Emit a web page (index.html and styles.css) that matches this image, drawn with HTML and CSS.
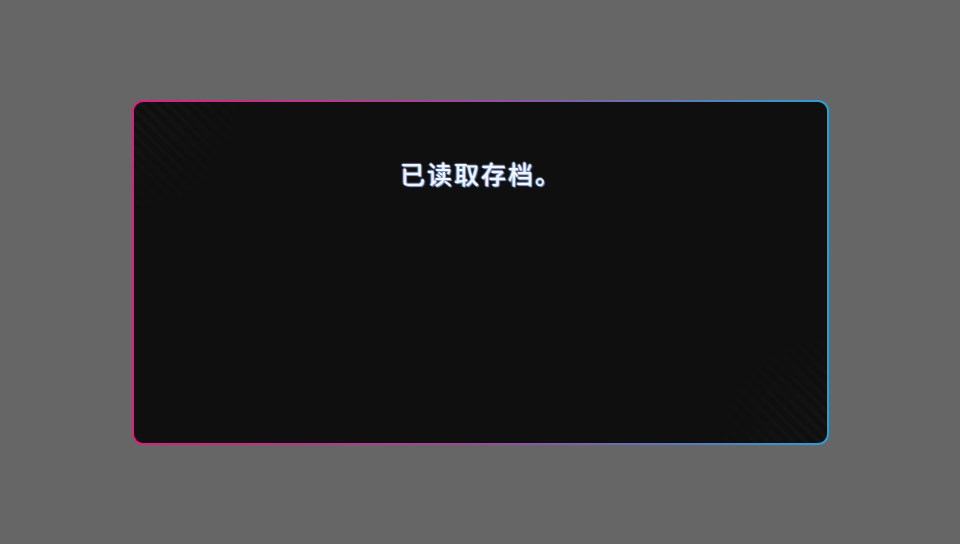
FILE: index.html
```html
<!DOCTYPE html>
<html lang="zh-CN">
<head>
<meta charset="utf-8">
<title>存档</title>
<link rel="stylesheet" href="styles.css">
</head>
<body>
<div class="stage">
  <div class="card">
    <p class="message">已读取存档。</p>
  </div>
</div>
</body>
</html>
```
FILE: styles.css
```css
html, body {
  margin: 0;
  padding: 0;
  height: 100%;
  background: #666666;
}
.stage {
  height: 100%;
  display: flex;
  align-items: center;
  justify-content: center;
}
.card {
  position: relative;
  box-sizing: border-box;
  width: 697px;
  height: 345px;
  border: 2px solid transparent;
  border-radius: 11px;
  background:
    linear-gradient(#0f0f0f, #0f0f0f) padding-box,
    linear-gradient(90deg, #de1f7c 0%, #9a4a9c 50%, #2a9fd4 100%) border-box;
  padding-top: 53px;
  overflow: hidden;
}
.card::before,
.card::after {
  content: "";
  position: absolute;
  width: 150px;
  height: 150px;
  background: repeating-linear-gradient(45deg, rgba(255,255,255,0.025) 0 4px, transparent 4px 9px);
  pointer-events: none;
}
.card::before {
  left: 0;
  top: 0;
  -webkit-mask-image: radial-gradient(circle at 0 0, #000 0, transparent 65%);
  mask-image: radial-gradient(circle at 0 0, #000 0, transparent 65%);
}
.card::after {
  right: 0;
  bottom: 0;
  -webkit-mask-image: radial-gradient(circle at 100% 100%, #000 0, transparent 65%);
  mask-image: radial-gradient(circle at 100% 100%, #000 0, transparent 65%);
}
.message {
  margin: 0;
  padding-left: 2px;
  text-align: center;
  font-family: "Noto Sans CJK SC", "Noto Sans", sans-serif;
  font-size: 25px;
  font-weight: 500;
  line-height: 36px;
  letter-spacing: 2px;
  color: #f2f4ff;
  text-shadow: 1px 1px 1px #7f9fd8, -1px 0 1px rgba(140,170,230,0.6), 0 -1px 1px rgba(200,215,255,0.4);
}
```
